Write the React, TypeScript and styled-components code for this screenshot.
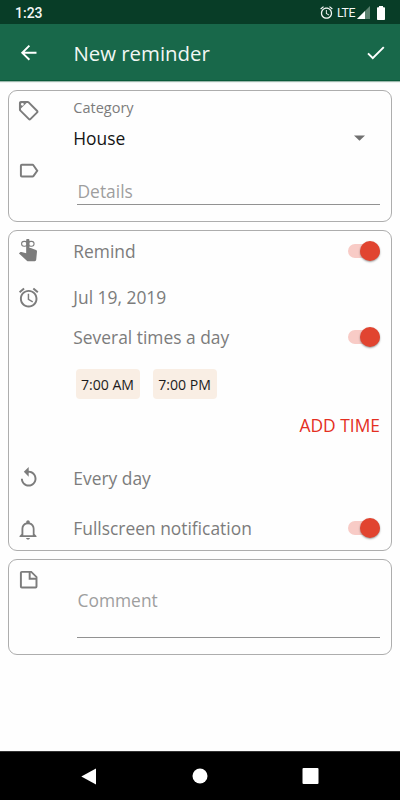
import React, { useState } from "react";
import styled, { createGlobalStyle } from "styled-components";

const GlobalStyle = createGlobalStyle`
  * { box-sizing: border-box; }
  body { margin: 0; background: #fefefe; }
  button { border: 0; background: none; padding: 0; font: inherit; color: inherit; }
`;

const Screen = styled.div`
  display: flex;
  flex-direction: column;
  width: 400px;
  height: 800px;
  background: #fefefe;
  font-family: "Open Sans", "Noto Sans", sans-serif;
  font-weight: 400;
  color: #757575;
  overflow: hidden;
`;

const StatusBar = styled.div`
  display: flex;
  align-items: center;
  flex: none;
  height: 24px;
  padding: 1px 15px 0 15px;
  background: #083d27;
  color: #f4f7f5;
  font-family: Roboto, sans-serif;
`;

const Clock = styled.span`
  flex: 1;
  padding-top: 1px;
  font-size: 14px;
  font-weight: 500;
  line-height: 22px;
`;

const Network = styled.span`
  margin: 0 1px 0 3px;
  font-size: 12.3px;
  font-weight: 400;
  line-height: 22px;
  letter-spacing: -0.45px;
`;

const StatusIcon = styled.svg`
  display: block;
  flex: none;
`;

const AppBar = styled.header`
  display: flex;
  align-items: center;
  flex: none;
  height: 57px;
  padding: 1px 13px 0 17px;
  background: #18684a;
  border-bottom: 1px solid #0b5b3b;
  box-shadow: 0 1px 1px rgba(10, 80, 50, 0.4);
  color: #fff;
`;

const Title = styled.h1`
  flex: 1;
  margin: 0 0 0 33px;
  font-size: 20.4px;
  font-weight: 400;
  line-height: 28px;
  color: #f1f7f4;
`;

const Glyph = styled.svg`
  display: block;
  flex: none;
  width: 23.4px;
  height: 23.4px;
  fill: currentColor;
`;

const Cards = styled.main`
  display: flex;
  flex-direction: column;
  gap: 8px;
  flex: 1;
  padding: 9px 8px 0;
`;

const Card = styled.section<{ $height: number }>`
  height: ${(p) => p.$height}px;
  border: 1px solid #adadad;
  border-radius: 9px;
`;

const Row = styled.div<{ $height: number; $top?: boolean }>`
  display: grid;
  grid-template-columns: 64px 1fr auto;
  align-items: ${(p) => (p.$top ? "start" : "center")};
  height: ${(p) => p.$height}px;
  padding-right: 11px;
`;

const IconCell = styled.div<{ $drop?: number }>`
  padding-left: 7.8px;
  padding-top: ${(p) => p.$drop ?? 0}px;
  color: #7c7c7c;
`;

const Label = styled.span<{ $size?: number; $dark?: boolean }>`
  padding-left: 0.3px;
  font-size: ${(p) => p.$size ?? 17.4}px;
  line-height: 24px;
  white-space: nowrap;
  color: ${(p) => (p.$dark ? "#141414" : "#7c7c7c")};
`;

const Caret = styled.svg`
  display: block;
  margin-right: 15px;
`;

const Field = styled.input<{ $height: number; $textDrop: number }>`
  grid-column: 2 / 4;
  width: auto;
  min-width: 0;
  margin-left: 4px;
  height: ${(p) => p.$height}px;
  padding: ${(p) => p.$textDrop}px 0 0 0.5px;
  border: 0;
  border-bottom: 1px solid #929292;
  outline: 0;
  background: none;
  font: 400 17.4px/24px "Open Sans", "Noto Sans", sans-serif;
  color: #111;
  &::placeholder { color: #9e9e9e; opacity: 1; }
`;

const Track = styled.button`
  display: flex;
  align-items: center;
  width: 32px;
  height: 14px;
  background: #f8cbc6 !important;
  border-radius: 7px;
`;

const Thumb = styled.span<{ $on: boolean }>`
  flex: none;
  width: 20px;
  height: 20px;
  margin-left: ${(p) => (p.$on ? 12 : 0)}px;
  border-radius: 50%;
  background: ${(p) => (p.$on ? "#e14430" : "#fafafa")};
  box-shadow: 0 1px 2px rgba(0, 0, 0, 0.4);
`;

const Chips = styled.div`
  display: flex;
  gap: 13px;
  padding: 18px 0 0 66.5px;
  height: 51px;
`;

const Chip = styled.span`
  width: 64px;
  height: 30px;
  border-radius: 4px;
  background: #f9eee4;
  color: #1c1c1c;
  font-size: 14.1px;
  line-height: 31px;
  text-align: center;
  white-space: nowrap;
`;

const AddRow = styled.div`
  display: flex;
  justify-content: flex-end;
  align-items: center;
  height: 46px;
  padding-right: 11px;
`;

const AddButton = styled.button`
  font-size: 17.4px !important;
  line-height: 24px;
  color: #e42f22 !important;
`;

const NavBar = styled.nav`
  display: flex;
  align-items: center;
  flex: none;
  height: 49px;
  padding: 0 81px 0 80px;
  justify-content: space-between;
  background: #000;
  border-top: 1px solid #333;
`;

const paths = {
  back: "M20 11H7.83l5.59-5.59L12 4l-8 8 8 8 1.41-1.41L7.83 13H20v-2z",
  check: "M9 16.17L4.83 12l-1.42 1.41L9 19 21 7l-1.41-1.41z",
  tag: "M5.5,7A1.5,1.5 0 0,0 7,5.5A1.5,1.5 0 0,0 5.5,4A1.5,1.5 0 0,0 4,5.5A1.5,1.5 0 0,0 5.5,7M21.41,11.58C21.77,11.94 22,12.44 22,13C22,13.55 21.78,14.05 21.41,14.41L14.41,21.41C14.05,21.77 13.55,22 13,22C12.45,22 11.95,21.77 11.58,21.41L2.59,12.41C2.22,12.05 2,11.55 2,11V4C2,2.89 2.89,2 4,2H11C11.55,2 12.05,2.22 12.41,2.58L21.41,11.58M13,20L20,13L11.2,4.2L9.8,4L4,9.8L4.2,11.2L13,20Z",
  label: "M16,17H5V7H16L19.55,12M17.63,5.84C17.27,5.33 16.67,5 16,5H5A2,2 0 0,0 3,7V17A2,2 0 0,0 5,19H16C16.67,19 17.27,18.66 17.63,18.15L22,12L17.63,5.84Z",
  alarm: "M22 5.72l-4.6-3.86-1.29 1.53 4.6 3.86L22 5.72zM7.88 3.39L6.6 1.86 2 5.71l1.29 1.53 4.59-3.85zM12.5 8H11v6l4.75 2.85.75-1.23-4-2.37V8zM12 4c-4.97 0-9 4.03-9 9s4.02 9 9 9c4.97 0 9-4.03 9-9s-4.03-9-9-9zm0 16c-3.87 0-7-3.13-7-7s3.13-7 7-7 7 3.13 7 7-3.13 7-7 7z",
  replay: "M12 5V1L7 6l5 5V7c3.31 0 6 2.69 6 6s-2.69 6-6 6-6-2.69-6-6H4c0 4.42 3.58 8 8 8s8-3.58 8-8-3.58-8-8-8z",
  bell: "M11.3 22c1.1 0 2-.7 2-1.6h-4c0 .9.9 1.6 2 1.6zM18 16.4v-5.4c0-3.07-1.9-5.64-4.9-6.32V4c0-.9-.8-1.8-1.8-1.8S9.5 3.1 9.5 4v.68C6.5 5.36 4.6 7.92 4.6 11v5.4l-2 2v1h17.4v-1zM16.2 17.7H6.5v-6.7c0-2.6 1.9-4.7 4.8-4.7s4.9 2.1 4.9 4.7z",
  note: "M14,10H19.5L14,4.5V10M5,3H15L21,9V19A2,2 0 0,1 19,21H5C3.89,21 3,20.1 3,19V5C3,3.89 3.89,3 5,3M5,5V19H19V12H12V5H5Z",
};

const Icon = ({ name }: { name: keyof typeof paths }) => (
  <Glyph viewBox="0 0 24 24" aria-hidden>
    <path d={paths[name]} fillRule="evenodd" />
  </Glyph>
);

/* A hand with a string tied round the index finger. */
const StringFinger = () => (
  <Glyph viewBox="0 0 24 24" aria-hidden>
    <path d="M9.4 1.4a1.7 1.7 0 0 1 3.4 0V9.2h1.3l5.4 2.2c.8.4 1.1 1 1 1.8l-.8 8.2c-.1.8-.7 1.4-1.5 1.4h-6.6c-.6 0-1.1-.2-1.5-.6L2 14.8l1.2-1.1c.4-.4.9-.4 1.4-.3l4.8 1.1z" />
    <g fill="none" stroke="currentColor" strokeWidth="1.1">
      <rect x="4.7" y="2.4" width="5.8" height="5" rx="2.5" />
      <rect x="11.7" y="2.4" width="5.8" height="5" rx="2.5" />
    </g>
  </Glyph>
);

const Switch = ({ label }: { label: string }) => {
  const [on, setOn] = useState(true);
  return (
    <Track role="switch" aria-label={label} aria-checked={on} onClick={() => setOn(!on)}>
      <Thumb $on={on} />
    </Track>
  );
};

export default function App() {
  return (
    <>
      <GlobalStyle />
      <Screen>
        <StatusBar>
          <Clock>1:23</Clock>
          <StatusIcon width="15" height="15" viewBox="0 0 24 24" fill="currentColor">
            <path d={paths.alarm} fillRule="evenodd" />
          </StatusIcon>
          <Network>LTE</Network>
          <StatusIcon width="14" height="13" viewBox="0 0 14 13">
            <path d="M14 0V13H1z" fill="#5c8270" />
            <path d="M9 5V13H1z" fill="#fff" />
          </StatusIcon>
          <StatusIcon width="15" height="14" viewBox="0 0 15 14">
            <path d="M9 0h4v1.3h1.2q.8 0 .8.8V13.2q0 .8-.8.8H7.8q-.8 0-.8-.8V2.1q0-.8.8-.8H9z" fill="#fff" />
          </StatusIcon>
        </StatusBar>

        <AppBar>
          <button aria-label="Back"><Icon name="back" /></button>
          <Title>New reminder</Title>
          <button aria-label="Save"><Icon name="check" /></button>
        </AppBar>

        <Cards>
          <Card $height={132}>
            <Row $height={34}>
              <IconCell $drop={4.6}><Icon name="tag" /></IconCell>
              <Label $size={14.5}>Category</Label>
            </Row>
            <Row $height={26}>
              <span />
              <Label $dark>House</Label>
              <Caret width="11" height="6" viewBox="0 0 11 6"><path d="M0 .5h11L5.5 5.8z" fill="#707070" /></Caret>
            </Row>
            <Row $height={60} $top>
              <IconCell $drop={7.6}><Icon name="label" /></IconCell>
              <Field $height={54} $textDrop={26} placeholder="Details" />
            </Row>
          </Card>

          <Card $height={321}>
            <Row $height={40}>
              <IconCell><StringFinger /></IconCell>
              <Label>Remind</Label>
              <Switch label="Remind" />
            </Row>
            <Row $height={52}>
              <IconCell $drop={1}><Icon name="alarm" /></IconCell>
              <Label>Jul 19, 2019</Label>
            </Row>
            <Row $height={28}>
              <span />
              <Label>Several times a day</Label>
              <Switch label="Several times a day" />
            </Row>
            <Chips>
              <Chip>7:00 AM</Chip>
              <Chip>7:00 PM</Chip>
            </Chips>
            <AddRow><AddButton>ADD TIME</AddButton></AddRow>
            <Row $height={60}>
              <IconCell><Icon name="replay" /></IconCell>
              <Label>Every day</Label>
            </Row>
            <Row $height={40}>
              <IconCell $drop={4}><Icon name="bell" /></IconCell>
              <Label>Fullscreen notification</Label>
              <Switch label="Fullscreen notification" />
            </Row>
          </Card>

          <Card $height={96}>
            <Row $height={78} $top>
              <IconCell $drop={7.5}><Icon name="note" /></IconCell>
              <Field $height={78} $textDrop={2} placeholder="Comment" />
            </Row>
          </Card>
        </Cards>

        <NavBar>
          <StatusIcon width="17" height="17" viewBox="0 0 17 17"><path d="M16 .5v16L1.3 8.5z" fill="#fff" /></StatusIcon>
          <StatusIcon width="16" height="16" viewBox="0 0 16 16"><circle cx="8" cy="8" r="7.5" fill="#fff" /></StatusIcon>
          <StatusIcon width="17" height="16" viewBox="0 0 17 16"><rect x=".5" width="16" height="16" rx="1" fill="#fff" /></StatusIcon>
        </NavBar>
      </Screen>
    </>
  );
}
